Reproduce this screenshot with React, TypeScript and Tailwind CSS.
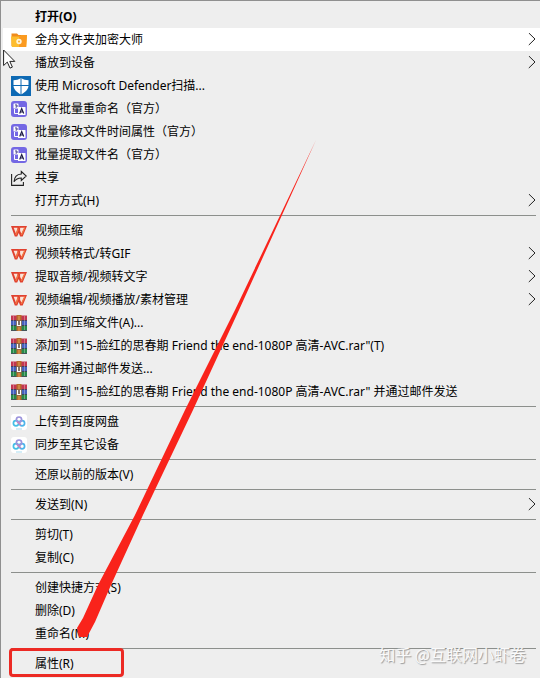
import { Fragment, type ReactNode } from 'react';

type IconName = 'folder' | 'defender' | 'rename' | 'share' | 'wps' | 'rar' | 'netdisk';

interface MenuItem {
  label: string;
  icon?: IconName;
  submenu?: boolean;
  bold?: boolean;
  active?: boolean;
  marked?: boolean;
}

const groups: MenuItem[][] = [
  [
    { label: '打开(O)', bold: true },
    { label: '金舟文件夹加密大师', icon: 'folder', submenu: true, active: true },
    { label: '播放到设备', submenu: true },
    { label: '使用 Microsoft Defender扫描...', icon: 'defender' },
    { label: '文件批量重命名（官方）', icon: 'rename' },
    { label: '批量修改文件时间属性（官方）', icon: 'rename' },
    { label: '批量提取文件名（官方）', icon: 'rename' },
    { label: '共享', icon: 'share' },
    { label: '打开方式(H)', submenu: true },
  ],
  [
    { label: '视频压缩', icon: 'wps' },
    { label: '视频转格式/转GIF', icon: 'wps', submenu: true },
    { label: '提取音频/视频转文字', icon: 'wps', submenu: true },
    { label: '视频编辑/视频播放/素材管理', icon: 'wps', submenu: true },
    { label: '添加到压缩文件(A)...', icon: 'rar' },
    { label: '添加到 "15-脸红的思春期 Friend the end-1080P 高清-AVC.rar"(T)', icon: 'rar' },
    { label: '压缩并通过邮件发送...', icon: 'rar' },
    { label: '压缩到 "15-脸红的思春期 Friend the end-1080P 高清-AVC.rar" 并通过邮件发送', icon: 'rar' },
  ],
  [
    { label: '上传到百度网盘', icon: 'netdisk' },
    { label: '同步至其它设备', icon: 'netdisk' },
  ],
  [{ label: '还原以前的版本(V)' }],
  [{ label: '发送到(N)', submenu: true }],
  [{ label: '剪切(T)' }, { label: '复制(C)' }],
  [{ label: '创建快捷方式(S)' }, { label: '删除(D)' }, { label: '重命名(M)' }],
  [{ label: '属性(R)', marked: true }],
];

const icons: Record<IconName, ReactNode> = {
  folder: (
    <svg viewBox="0 0 16 16" className="size-4">
      <path d="M.5 1.500h5.500L7.500 3h7.500v11H.5z" fill="#f08c1c" />
      <path d="M0 4.500h9.500L11 3h5l-.8 12H.8z" fill="#fdbd2e" />
      <path d="M8 4.500h1.500L11 3h5l-.8 12H8z" fill="#fb9a20" />
      <circle cx="8" cy="9.500" r="2.700" fill="#fff6dc" />
      <circle cx="8" cy="9.500" r=".9" fill="#f5a623" />
    </svg>
  ),
  defender: (
    <svg viewBox="0 0 20 20" className="size-5 shrink-0">
      <path d="M0 0h20v20H0z" fill="#0e6ab4" />
      <path d="M10 2c2.300 1.500 4.800 2.200 7.500 2.300v5.200c0 4-3.500 7-7.500 8.900-4-1.900-7.500-4.900-7.500-8.900V4.300C5.200 4.200 7.700 3.500 10 2z" fill="#fff" />
      <path d="M10 1v18M2 9.500h16" stroke="#0e6ab4" />
    </svg>
  ),
  rename: (
    <svg viewBox="0 0 16 16" className="size-4">
      <rect width="16" height="16" rx="3" fill="#7468e4" />
      <rect x="2.500" y="2.500" width="5" height="5" rx=".6" fill="#fff" />
      <path d="M4 4h2v2H4.500" fill="none" stroke="#3d3688" />
      <path d="M3.500 8v4.500H7" fill="none" stroke="#fff" />
      <rect x="7" y="6" width="7.500" height="8" rx=".6" fill="#fff" />
      <path d="M8.700 12.500l2-5 2 5M9.500 11h2.400" fill="none" stroke="#1d1b45" strokeWidth="1.200" />
    </svg>
  ),
  share: (
    <svg viewBox="0 0 16 16" className="size-4" fill="none" stroke="#222" strokeWidth="1.100">
      <path d="M.6 4v11.400h11.800V12" />
      <path d="M10.300 1.500l5 4.500-5 4.500V8C7 8 4.800 9 3 11.800 3.300 7.300 6 4.300 10.300 4z" />
    </svg>
  ),
  wps: (
    <svg viewBox="0 0 16 16" className="size-4">
      <path d="M0 3h16l-4.300 10.500H9.200L7.700 10l-1.500 3.500H3.800z" fill="#e0402f" />
      <path d="M2.600 4.800h4L4.900 10.500z" fill="#fbe3d8" />
      <path d="M9.300 4.800h4.300L10.500 10.800 8.600 7z" fill="#fbe3d8" />
      <path d="M4.900 12l3.300-8.500M10.400 12L13.800 4.500" fill="none" stroke="#f27843" strokeWidth="1.300" />
      <path d="M7.200 3.500l1.600 4" stroke="#e0402f" strokeWidth="1.200" />
    </svg>
  ),
  rar: (
    <svg viewBox="0 0 16 16" className="size-4">
      <path d="M0 .5h16v5H0z" fill="#c23650" />
      <path d="M0 5.500h16v5H0z" fill="#4560be" />
      <path d="M0 10.500h16v5H0z" fill="#27894a" />
      <path d="M0 5.500h16M0 10.500h16M0 15.500h16" stroke="#26283c" strokeWidth=".7" />
      <path d="M2.500 1v14M13.500 1v14" stroke="#fff" strokeOpacity=".3" />
      <path d="M5.500 0h5v16h-5z" fill="#b96b2b" />
      <path d="M5 5.500h6v6H5z" fill="#75655a" />
      <path d="M6.500 6v4.500h3V6" fill="none" stroke="#fff" strokeWidth="1.200" />
      <path d="M8 1v4M8 12v4" stroke="#e4a45b" />
    </svg>
  ),
  netdisk: (
    <svg viewBox="0 0 16 16" className="size-4" fill="none">
      <rect width="16" height="16" rx="3" fill="#fff" />
      <circle cx="5" cy="9.300" r="2.600" stroke="#45bfe6" strokeWidth="1.700" />
      <circle cx="11" cy="9.300" r="2.600" stroke="#4db4ea" strokeWidth="1.700" />
      <circle cx="8" cy="5.600" r="2.600" stroke="#9c93dc" strokeWidth="1.700" />
      <path d="M6.500 7.800l3.300 3.200" stroke="#cf83bd" strokeWidth="1.700" />
      <path d="M5 15h6" stroke="#a9dcef" />
    </svg>
  ),
};

function MenuRow({ item }: { item: MenuItem }) {
  return (
    <li className="relative" role="none">
      <button
        type="button"
        role="menuitem"
        aria-haspopup={item.submenu ? 'menu' : undefined}
        className={`flex h-[23px] w-full items-center pr-1 pl-2 text-left whitespace-nowrap ${item.active ? 'bg-white' : ''} ${item.bold ? 'font-bold' : ''}`}
      >
        <span className="flex w-6 shrink-0 items-center">{item.icon && icons[item.icon]}</span>
        <span className="flex-1">{item.label}</span>
        {item.submenu && (
          <svg viewBox="0 0 8 14" className="h-3.5 w-2 shrink-0" fill="none" stroke="#222">
            <path d="M.8 0l6.200 6-6.200 6" />
          </svg>
        )}
      </button>
      {item.marked && (
        <span className="pointer-events-none absolute -top-1 -bottom-0.5 left-1.5 w-[115px] rounded-sm border-3 border-[#ec2a24]" />
      )}
    </li>
  );
}

export default function App() {
  return (
    <main className="relative overflow-hidden border-t border-l border-[#8f8f8f] bg-[#eeeeee] pt-1 pb-[3px] pl-0.5 font-['Noto_Sans','Noto_Sans_CJK_SC',sans-serif] text-xs text-black">
      <ul role="menu">
        {groups.map((group, index) => (
          <Fragment key={group[0].label}>
            {index > 0 && (
              <li role="separator" className="mr-1 ml-2 py-[3px]">
                <div className="h-px bg-[#8c8f8c]" />
              </li>
            )}
            {group.map(item => (
              <MenuRow key={item.label} item={item} />
            ))}
          </Fragment>
        ))}
      </ul>

      {/* Mouse pointer */}
      <svg viewBox="0 0 13 20" className="pointer-events-none absolute top-12 left-0.5 h-5 w-[13px]">
        <path d="M.6 1v15.500l3.700-3.400 2.700 6 2.400-1-2.600-5.700h5z" fill="#fff" stroke="#222" />
      </svg>

      {/* Arrow pointing at the last entry */}
      <svg viewBox="0 0 540 678" className="pointer-events-none absolute -top-px -left-px h-[678px] w-[540px]">
        <path d="M316 140L239 310 193 410 143 515 111 585 95 622 87 637 79 637 77 628 83 618 98 585 135 515 185 410 235 310z" fill="#f9231b" />
      </svg>

      <p className="pointer-events-none absolute right-3.5 bottom-3 font-['Noto_Sans_CJK_SC',sans-serif] text-base leading-6 text-[#fafafa] [text-shadow:1px_1px_1px_#999]">
        知乎 @互联网小虾卷
      </p>
    </main>
  );
}
